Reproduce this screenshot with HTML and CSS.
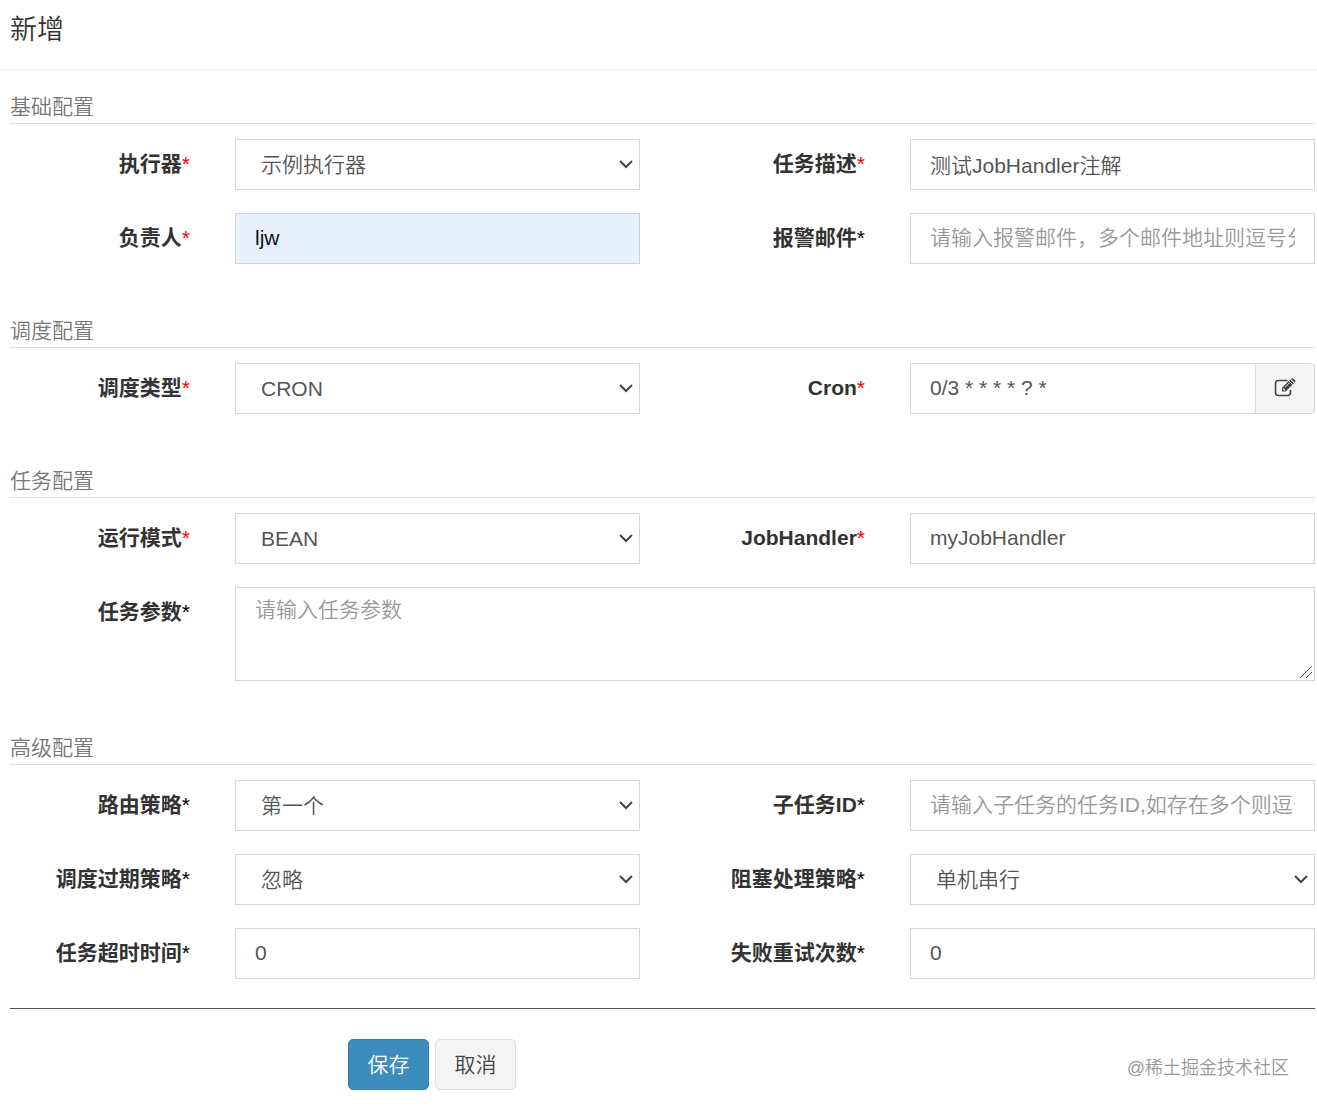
FILE: index.html
```html
<!DOCTYPE html>
<html lang="zh-CN">
<head>
  <meta charset="UTF-8">
  <meta name="viewport" content="width=device-width, initial-scale=1.0">
  <title>新增</title>
  <link rel="stylesheet" href="styles.css">
</head>
<body>
  <header class="modal-header">
    <h4 class="modal-title">新增</h4>
  </header>
  <form class="modal-body">
    <section class="group">
      <h5 class="group-title">基础配置</h5>
      <div class="fields">
        <label for="jobGroup">执行器<span class="required">*</span></label>
        <select class="form-control" id="jobGroup"><option>示例执行器</option></select>
        <label for="jobDesc">任务描述<span class="required">*</span></label>
        <input type="text" class="form-control" id="jobDesc" value="测试JobHandler注解">
        <label for="author">负责人<span class="required">*</span></label>
        <input type="text" class="form-control autofilled" id="author" value="ljw">
        <label for="alarmEmail">报警邮件<span class="optional">*</span></label>
        <input type="text" class="form-control" id="alarmEmail" placeholder="请输入报警邮件，多个邮件地址则逗号分隔">
      </div>
    </section>

    <section class="group">
      <h5 class="group-title">调度配置</h5>
      <div class="fields">
        <label for="scheduleType">调度类型<span class="required">*</span></label>
        <select class="form-control" id="scheduleType"><option>CRON</option></select>
        <label for="cron">Cron<span class="required">*</span></label>
        <div class="input-group">
          <input type="text" class="form-control" id="cron" value="0/3 * * * * ? *">
          <button type="button" class="btn-addon" aria-label="编辑 Cron">
            <svg width="22" height="20" viewBox="0 0 22 20">
              <path d="M13.500 2.500H4.500a3 3 0 0 0-3 3v9a3 3 0 0 0 3 3h9a3 3 0 0 0 3-3v-2.500" fill="none" stroke="#444" stroke-width="1.600"/>
              <path d="M8 13.500v-3.700L16.200 1.600l3.700 3.700L11.700 13.500z" fill="#444"/>
              <path d="M9.300 10.300v1.300h1.300v1.200M14.900 2.900l3.700 3.700M11 9.300l4.500-4.500" fill="none" stroke="#f4f4f4" stroke-width="1"/>
              <path d="M17 1l.5-.5q.8-.7 1.600 0l2 2q.700.800 0 1.600l-.5.5z" fill="#444"/>
            </svg>
          </button>
        </div>
      </div>
    </section>

    <section class="group">
      <h5 class="group-title">任务配置</h5>
      <div class="fields">
        <label for="glueType">运行模式<span class="required">*</span></label>
        <select class="form-control" id="glueType"><option>BEAN</option></select>
        <label for="handler">JobHandler<span class="required">*</span></label>
        <input type="text" class="form-control" id="handler" value="myJobHandler">
        <label for="param">任务参数<span class="optional">*</span></label>
        <textarea class="form-control" id="param" placeholder="请输入任务参数"></textarea>
      </div>
    </section>

    <section class="group">
      <h5 class="group-title">高级配置</h5>
      <div class="fields">
        <label for="route">路由策略<span class="optional">*</span></label>
        <select class="form-control" id="route"><option>第一个</option></select>
        <label for="childJob">子任务ID<span class="optional">*</span></label>
        <input type="text" class="form-control" id="childJob" placeholder="请输入子任务的任务ID,如存在多个则逗号分隔">
        <label for="misfire">调度过期策略<span class="optional">*</span></label>
        <select class="form-control" id="misfire"><option>忽略</option></select>
        <label for="block">阻塞处理策略<span class="optional">*</span></label>
        <select class="form-control" id="block"><option>单机串行</option></select>
        <label for="timeout">任务超时时间<span class="optional">*</span></label>
        <input type="text" class="form-control" id="timeout" value="0">
        <label for="retry">失败重试次数<span class="optional">*</span></label>
        <input type="text" class="form-control" id="retry" value="0">
      </div>
    </section>

    <div class="actions">
      <button type="submit" class="btn btn-primary">保存</button>
      <button type="button" class="btn btn-default">取消</button>
      <span class="watermark">@稀土掘金技术社区</span>
    </div>
  </form>
</body>
</html>
```
FILE: styles.css
```css
* {
  box-sizing: border-box;
}
body {
  margin: 0;
  font-family: "Liberation Sans", "Noto Sans CJK SC", sans-serif;
  font-size: 21px;
  font-weight: 350;
  line-height: 30px;
  color: #333;
  background: #fff;
}
.modal-header {
  padding: 10px 10px 19px;
  border-bottom: 1px solid #f0f0f0;
}
.modal-title {
  margin: 0;
  font-size: 27px;
  font-weight: 350;
  line-height: 40px;
}
.modal-body {
  padding: 21px 2px 16px 10px;
}
.group + .group {
  margin-top: 51px;
}
.group-title {
  margin: 0 0 15px;
  font-size: 21px;
  font-weight: 350;
  line-height: 32px;
  color: #777;
  border-bottom: 1px solid #e0e0e0;
}
.fields {
  display: grid;
  grid-template-columns: minmax(0, 4fr) minmax(0, 9fr) minmax(0, 4fr) minmax(0, 9fr);
  gap: 23px 45px;
}
label {
  padding-top: 10px;
  font-weight: bold;
  text-align: right;
  white-space: nowrap;
}
.required,
.optional {
  font-weight: normal;
}
.required {
  color: red;
}
.optional {
  color: #000;
}
.form-control {
  width: 100%;
  height: 51px;
  padding: 8px 19px 10px;
  border: 1px solid #d5d5d8;
  border-radius: 0;
  background-color: #fff;
  color: #555;
  font: inherit;
}
.form-control::placeholder {
  color: #999;
  opacity: 1;
}
select.form-control {
  appearance: none;
  padding: 9px 25px;
  background-image: url("data:image/svg+xml,%3Csvg xmlns='http://www.w3.org/2000/svg' width='14' height='9' viewBox='0 0 14 9'%3E%3Cpath d='M1 1l6 6 6-6' fill='none' stroke='%23444' stroke-width='2'/%3E%3C/svg%3E");
  background-repeat: no-repeat;
  background-position: right 6px center;
}
textarea.form-control {
  display: block;
  grid-column: 2 / -1;
  height: 94px;
  padding: 7px 19px;
  resize: vertical;
}
textarea.form-control::-webkit-resizer {
  background: url("data:image/svg+xml,%3Csvg xmlns='http://www.w3.org/2000/svg' width='15' height='15' viewBox='0 0 15 15'%3E%3Cpath d='M1 13L13 1M7 13l6-6' fill='none' stroke='%23555'/%3E%3C/svg%3E") no-repeat right bottom;
}
.autofilled {
  background-color: #e8f0fe;
  border-color: #ccd3e2;
  color: #111;
}
.input-group {
  display: flex;
}
.input-group .form-control {
  flex: 1;
  min-width: 0;
}
.btn-addon {
  width: 60px;
  margin-left: -1px;
  padding: 0 0 2px;
  border: 1px solid #d9d9d9;
  border-radius: 0 4px 4px 0;
  background: #f4f4f4;
}
.btn-addon svg {
  display: block;
  margin: 0 auto;
}
.actions {
  display: flex;
  align-items: center;
  gap: 6px;
  margin-top: 29px;
  padding: 30px 26px 0 338px;
  border-top: 1px solid #555;
}
.btn {
  min-width: 81px;
  height: 51px;
  padding: 0 18px;
  border: 1px solid #ddd;
  border-radius: 5px;
  font: inherit;
  cursor: pointer;
}
.btn-primary {
  background: #3c8dbc;
  border-color: #367fa9;
  color: #fff;
}
.btn-default {
  background: #f4f4f4;
  color: #444;
}
.watermark {
  margin-left: auto;
  padding-top: 6px;
  font-size: 18px;
  color: #999;
}
```
